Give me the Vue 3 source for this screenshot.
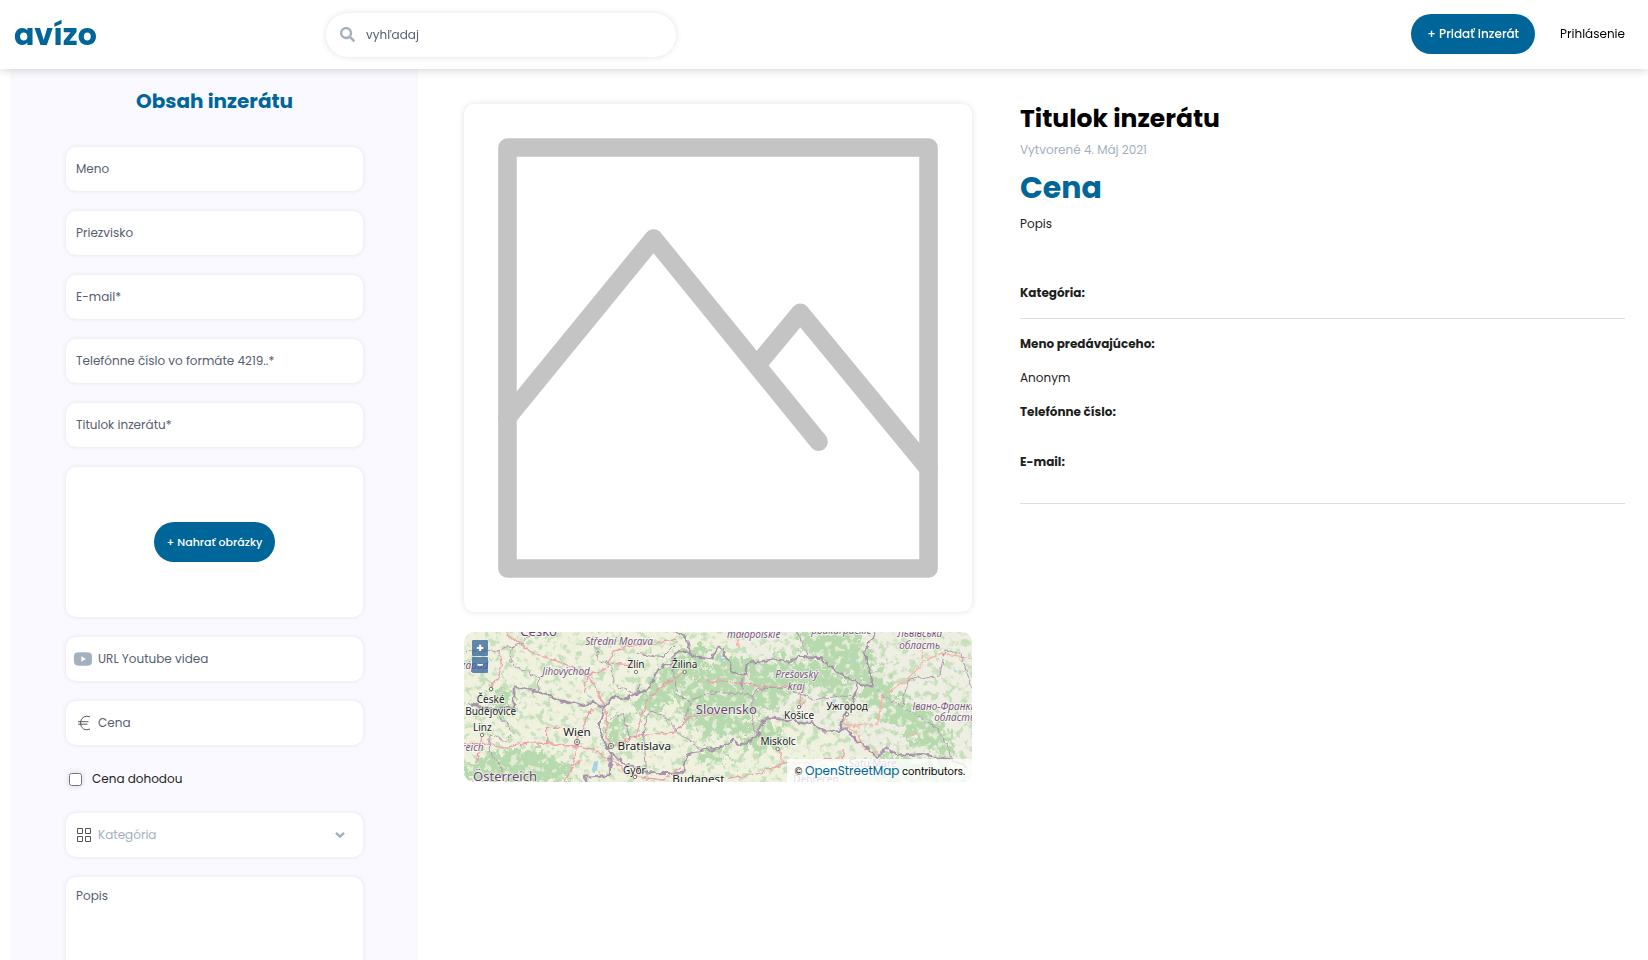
<script setup>
import { reactive } from 'vue'

const textFields = [
  { id: 'meno', label: 'Meno', type: 'text' },
  { id: 'priezvisko', label: 'Priezvisko', type: 'text' },
  { id: 'email', label: 'E-mail*', type: 'email' },
  { id: 'telefon', label: 'Telefónne číslo vo formáte 4219..*', type: 'tel' },
  { id: 'titulok', label: 'Titulok inzerátu*', type: 'text' },
]

const form = reactive({
  meno: '', priezvisko: '', email: '', telefon: '', titulok: '',
  video: '', cena: '', dohodou: false, kategoria: '', popis: '',
})
</script>

<template>
  <div class="app">
    <header class="topbar">
      <a class="logo" href="#">avízo</a>
      <form class="search" role="search" @submit.prevent>
        <svg class="search-icon" viewBox="0 0 512 512" aria-hidden="true">
          <path d="M505 442.7L405.3 343c-4.5-4.5-10.6-7-17-7H372c27.6-35.3 44-79.7 44-128C416 93.1 322.9 0 208 0S0 93.1 0 208s93.1 208 208 208c48.3 0 92.7-16.4 128-44v16.3c0 6.4 2.5 12.5 7 17l99.7 99.7c9.4 9.4 24.6 9.4 33.9 0l28.3-28.3c9.4-9.4 9.4-24.6.1-34zM208 336c-70.7 0-128-57.2-128-128 0-70.7 57.2-128 128-128 70.7 0 128 57.2 128 128 0 70.7-57.2 128-128 128z" />
        </svg>
        <input type="text" placeholder="vyhľadaj" aria-label="vyhľadaj" />
      </form>
      <nav class="actions">
        <button class="pill" type="button">+ Pridať inzerát</button>
        <a class="login" href="#">Prihlásenie</a>
      </nav>
    </header>

    <main class="layout">
      <form class="sidebar" @submit.prevent>
        <h2>Obsah inzerátu</h2>
        <div v-for="f in textFields" :key="f.id" class="field">
          <input v-model="form[f.id]" :type="f.type" :placeholder="f.label" :aria-label="f.label" />
        </div>

        <div class="field upload">
          <button class="pill small" type="button">+ Nahrať obrázky</button>
        </div>

        <div class="field with-icon">
          <svg class="icon" viewBox="0 0 20 16" aria-hidden="true">
            <path fill="#a4b0be" d="M4 1.600 Q10 1.100 16 1.600 Q18.700 1.800 18.900 4.200 Q19.200 8 18.900 11.800 Q18.700 14.200 16 14.400 Q10 14.900 4 14.400 Q1.300 14.200 1.100 11.800 Q.8 8 1.100 4.200 Q1.300 1.800 4 1.600z" />
            <path fill="#fff" d="M8.300 5.200L13 8l-4.700 2.800z" />
          </svg>
          <input v-model="form.video" type="url" placeholder="URL Youtube videa" aria-label="URL Youtube videa" />
        </div>

        <div class="field with-icon">
          <svg class="icon" viewBox="0 0 20 16" aria-hidden="true">
            <path fill="none" stroke="#333" stroke-width=".8" d="M17 1.800Q14 .6 11 1.800Q7.500 3.600 7.500 8Q7.500 12.600 11 14.300Q14 15.500 17 14M5 6.700h10.500M5 9.200h9.500" />
          </svg>
          <input v-model="form.cena" type="text" placeholder="Cena" aria-label="Cena" />
        </div>

        <div class="check">
          <input id="dohodou" v-model="form.dohodou" type="checkbox" />
          <label for="dohodou">Cena dohodou</label>
        </div>

        <div class="field with-icon">
          <svg class="icon" viewBox="0 0 20 16" aria-hidden="true">
            <path fill="none" stroke="#555" d="M4.500 1.500h5v5h-5zM12.500 1.500h5v5h-5zM4.500 9.500h5v5h-5zM12.500 9.500h5v5h-5z" />
          </svg>
          <select v-model="form.kategoria" aria-label="Kategória">
            <option value="">Kategória</option>
          </select>
          <svg class="chevron" viewBox="0 0 10 8" aria-hidden="true">
            <path fill="none" stroke="#a4b0be" stroke-width="2.400" d="M1 1.800l4 3.800 4-3.800" />
          </svg>
        </div>

        <div class="field area">
          <textarea v-model="form.popis" placeholder="Popis" aria-label="Popis"></textarea>
        </div>
      </form>

      <section class="preview">
        <div class="photo">
          <svg viewBox="140 140 1304 1304" role="img" aria-label="Obrázok inzerátu">
            <g fill="none" stroke="#c4c4c4" stroke-width="55" stroke-linejoin="round" stroke-linecap="round">
              <path d="M168 168H1416V1416H168z" />
              <path d="M168 968L601 438L1090 1040M918 800L1036 658L1416 1120" />
            </g>
          </svg>
        </div>

        <div class="map">
          <svg class="map-canvas" viewBox="0 0 1524 450" preserveAspectRatio="xMidYMid slice" role="img" aria-label="Mapa">
            <defs>
              <filter id="ragged" x="-5%" y="-5%" width="110%" height="110%" color-interpolation-filters="sRGB">
                <feTurbulence type="fractalNoise" baseFrequency="0.04" numOctaves="4" seed="4" result="n" />
                <feDisplacementMap in="SourceGraphic" in2="n" scale="90" xChannelSelector="R" yChannelSelector="G" />
              </filter>
              <filter id="crinkle" x="-5%" y="-5%" width="110%" height="110%" color-interpolation-filters="sRGB">
                <feTurbulence type="fractalNoise" baseFrequency="0.05" numOctaves="2" seed="9" result="n" />
                <feDisplacementMap in="SourceGraphic" in2="n" scale="20" xChannelSelector="R" yChannelSelector="G" />
              </filter>
              <filter id="woods" x="0" y="0" width="100%" height="100%" color-interpolation-filters="sRGB">
                <feTurbulence type="fractalNoise" baseFrequency="0.045" numOctaves="4" seed="21" />
                <feColorMatrix values="0 0 0 0 .74  0 0 0 0 .86  0 0 0 0 .70  8 0 0 0 -4.100" />
              </filter>
              <filter id="clearings" x="0" y="0" width="100%" height="100%" color-interpolation-filters="sRGB">
                <feTurbulence type="fractalNoise" baseFrequency="0.05" numOctaves="4" seed="7" />
                <feColorMatrix values="0 0 0 0 .93  0 0 0 0 .94  0 0 0 0 .87  0 8 0 0 -4.300" />
              </filter>
            </defs>
            <rect width="1524" height="450" fill="#f0f2df" />
            <path d="M780 0H1524V450H1200L1120 300L900 250z" fill="#efeee4" />
            <rect width="1524" height="450" filter="url(#woods)" opacity=".8" />
            <g fill="#b7d9ae" filter="url(#ragged)">
              <path d="M0 400L100 360L210 350L310 385L330 450H0z" />
              <path d="M70 165L145 175L150 260L90 240z" />
              <path d="M425 270L495 240L485 325L425 340z" />
              <path d="M505 230L585 120L650 50L730 30L735 90L660 150L610 220L525 250z" />
              <path d="M640 170L780 65L870 90L960 145L930 190L870 230L850 300L740 320L670 270L650 230z" />
              <path d="M830 120L930 75L1060 90L1160 150L1180 210L1130 200L1060 170L990 180L930 240L840 230z" />
              <path d="M1180 25L1250 100L1290 190L1370 220L1450 300L1470 395L1390 350L1280 280L1210 210L1180 150L1010 60L1000 0H1200z" />
              <path d="M830 290L900 270L960 290L930 350L850 365z" />
              <path d="M1240 370L1350 375L1460 400L1460 450H1230z" />
              <path d="M700 350L790 350L800 385L710 395z" />
            </g>
            <rect width="1524" height="450" filter="url(#clearings)" opacity=".8" />

            <g transform="translate(-42 -36)" fill="none">
              <path fill="#a9d3e4" d="M432 425l12-3-2 25-10 13-7-7zM408 222l20 10-8 3z" />
              <g stroke="#ee9dab" stroke-width="4" filter="url(#crinkle)">
                <path d="M160 30L215 75L260 105L330 125L415 168L468 262L470 350L482 378" />
                <path d="M42 370L120 370L150 385L240 368L360 375L430 390L480 420L560 470L640 480L690 440" />
                <path d="M415 165L470 145L490 90L560 75L680 60M415 165L403 215" />
                <path d="M482 378L560 345L590 240L650 190L704 155M550 350L680 335L720 290L810 280" />
                <path d="M380 365L400 320L425 265M290 370L290 325L350 325M380 370L370 430L345 486M385 420L350 470M490 130L550 135M730 180l18 2M770 182l40 2" />
                <path d="M150 90L155 150L124 205M96 345L80 430" />
              </g>
              <g stroke="#b09bb1" stroke-width="3" filter="url(#crinkle)">
                <path d="M185 75L180 120L200 145L270 170L265 215" />
                <path d="M42 95L100 90L140 95L215 70L245 36" />
                <path d="M150 290L190 340L165 365L120 345L118 390L155 440L160 486" />
                <path d="M435 70L445 120L485 135L490 190L560 225L570 195" />
                <path d="M480 300L520 280L540 360L500 380M600 270L580 330L590 460" />
                <path d="M600 270L660 300L680 335L735 370L750 395" />
                <path d="M670 150L680 220L720 250L710 290L680 335M720 240L810 215M560 100L640 110L680 70" />
              </g>
              <g stroke="#a892aa" stroke-width="6" stroke-linejoin="round" filter="url(#crinkle)">
                <path d="M55 250L110 265L190 262L195 200L260 215L330 240L400 258L425 245L465 262L450 300L450 340L470 380L482 395L480 465L400 470L410 486" />
                <path d="M465 262L480 240L500 230L530 238L600 200L625 145L660 130L680 97L710 95L740 110L785 115L805 80L820 90" />
                <path d="M680 36L710 55L720 95M482 395L520 430L590 460L700 458L710 405L735 395L810 385" />
              </g>
            </g>

            <g transform="translate(738 -36)" fill="none">
              <path fill="#a9d3e4" d="M25 112l22 4-12 9zM360 245l18-5-4 12zM425 120l18 6-10 6zM730 145l12 12h-8z" />
              <g stroke="#ee9dab" stroke-width="4" filter="url(#crinkle)">
                <path d="M15 185L100 190L150 200L268 200M268 215L268 258L290 245" />
                <path d="M203 388L220 430L150 460L50 475M215 430L300 432L345 415L400 418L403 390" />
              </g>
              <g stroke="#f3b6a5" stroke-width="4" filter="url(#crinkle)">
                <path d="M415 285L400 310L430 320L500 310L520 230L590 180L635 130L640 60L670 36M400 310L440 340L455 380L500 400M590 350L630 340M635 125L700 100L786 115M80 36L85 90" />
              </g>
              <g stroke="#b09bb1" stroke-width="3" filter="url(#crinkle)">
                <path d="M0 215L130 225L145 205L230 205L310 240L400 225L425 230M130 225L125 290L140 340" />
                <path d="M500 205L530 235L580 260L640 300L690 330L725 415M580 255L590 180L690 165L705 90L750 100L786 205" />
                <path d="M260 36L290 105M100 165L95 220" />
              </g>
              <g stroke="#a892aa" stroke-width="6" stroke-linejoin="round" filter="url(#crinkle)">
                <path d="M35 85L60 130L70 160L105 165L115 130L190 118L240 125L270 110L330 115L380 155L445 190L490 200L485 180L462 95L495 40" />
                <path d="M0 385L25 385L70 360L90 378L140 350L165 295L230 300L310 310L340 335L390 330L400 290L425 250L445 190" />
                <path d="M390 330L410 325L440 365L470 380L500 412L530 385L560 408L640 402L690 415L725 418L770 440" />
              </g>
            </g>

            <g class="dots" transform="translate(-42 -36)">
              <circle cx="123" cy="207" r="5" /><circle cx="96" cy="345" r="5" />
              <circle cx="558" cy="156" r="5" /><circle cx="704" cy="156" r="5" />
              <circle cx="555" cy="471" r="5" /><circle cx="1047" cy="261" r="5" />
              <circle cx="1191" cy="283" r="5" /><circle cx="983" cy="387" r="5" />
              <circle cx="381" cy="366" r="8" /><circle cx="381" cy="366" r="3" />
              <circle cx="483" cy="378" r="8" /><circle cx="483" cy="378" r="3" />
            </g>

            <g class="labels" transform="translate(-42 -36)">
              <g class="country">
                <text x="266" y="48">Česko</text>
                <text x="829" y="282">Slovensko</text>
                <text x="165" y="483">Österreich</text>
              </g>
              <g class="region">
                <text x="507" y="75">Střední Morava</text>
                <text x="348" y="166">Jihovýchod</text>
                <text x="74" y="147">západ</text>
                <text x="62" y="394">rreich</text>
                <text x="911" y="54">małopolskie</text>
                <text x="1174" y="42">podkarpackie</text>
                <text x="1040" y="175">Prešovský</text>
                <text x="1039" y="211">kraj</text>
                <text x="1409" y="50">Львівська</text>
                <text x="1409" y="86">область</text>
                <text x="1486" y="270">Івано-Франків</text>
                <text x="1514" y="304">область</text>
              </g>
              <g class="city">
                <text x="122" y="248">České</text>
                <text x="122" y="284">Budějovice</text>
                <text x="97" y="334">Linz</text>
                <text x="558" y="144">Zlín</text>
                <text x="704" y="144">Žilina</text>
                <text x="553" y="461">Győr</text>
                <text x="1047" y="296">Košice</text>
                <text x="1191" y="270">Ужгород</text>
                <text x="984" y="376">Miskolc</text>
              </g>
              <g class="region-city">
                <text x="1268" y="440">Satu Mare</text>
                <text x="1098" y="490">Debrecen</text>
              </g>
              <g class="capital">
                <text x="381" y="347">Wien</text>
                <text x="583" y="390">Bratislava</text>
                <text x="745" y="488">Budapest</text>
              </g>
            </g>
          </svg>
          <div class="zoom">
            <button type="button" aria-label="Priblížiť">+</button>
            <button type="button" aria-label="Oddialiť">−</button>
          </div>
          <p class="attribution">© <a href="#">OpenStreetMap</a> contributors.</p>
        </div>
      </section>

      <article class="details">
        <h1>Titulok inzerátu</h1>
        <p class="date">Vytvorené 4. Máj 2021</p>
        <p class="price">Cena</p>
        <p class="text">Popis</p>
        <section class="category">
          <h3>Kategória:</h3>
        </section>
        <section class="seller">
          <h3>Meno predávajúceho:</h3>
          <p>Anonym</p>
          <h3>Telefónne číslo:</h3>
          <p class="blank"></p>
          <h3>E-mail:</h3>
        </section>
      </article>
    </main>
  </div>
</template>

<style>
body {
  margin: 0;
  background: #fff;
}
</style>

<style scoped>
* {
  box-sizing: border-box;
}
.app {
  height: 100vh;
  overflow-y: auto;
  scrollbar-width: none;
  color: #1c1e21;
  font: 12px/20px Poppins, Inter, "Noto Sans", sans-serif;
}
h1, h2, h3, p {
  margin: 0;
}
a {
  color: inherit;
  text-decoration: none;
}
input, button, select, textarea {
  font: inherit;
  color: inherit;
}
.topbar {
  position: sticky;
  top: 0;
  z-index: 2;
  display: grid;
  grid-template-columns: 312px 350px 1fr;
  align-items: center;
  height: 69px;
  padding: 0 23px 0 14px;
  background: #fff;
  box-shadow: 0 2px 8px rgba(0, 0, 0, 0.15);
}
.logo {
  color: #006699;
  font-size: 30px;
  font-weight: 700;
  line-height: 40px;
}
.search {
  display: flex;
  align-items: center;
  gap: 11px;
  height: 44px;
  padding: 0 14px;
  border-radius: 22px;
  box-shadow: 0 0 6px rgba(0, 0, 0, 0.12);
}
.search-icon {
  width: 15px;
  height: 15px;
  fill: #a4b0be;
}
.search input {
  flex: 1;
  min-width: 0;
  padding: 0;
  border: 0;
  outline: 0;
  background: none;
}
::placeholder {
  color: #57606f;
  opacity: 1;
}
.actions {
  display: flex;
  justify-content: flex-end;
  align-items: center;
  gap: 25px;
  padding-bottom: 2px;
}
.login {
  color: #000;
}
.pill {
  height: 40px;
  padding: 0 16px;
  border: 0;
  border-radius: 20px;
  background: #006699;
  color: #fff;
  font-weight: 500;
}
.pill.small {
  padding: 0 13px;
  font-size: 11px;
}
.layout {
  display: grid;
  grid-template-columns: 403fr 508fr 605fr;
  gap: 48px;
  align-items: start;
  padding: 0 23px 0 13px;
}
.sidebar {
  display: flex;
  flex-direction: column;
  gap: 20px;
  padding: 16px 53px 40px;
  background: #f9f9ff;
  box-shadow: 0 0 4px rgba(0, 0, 0, 0.08);
}
.sidebar h2 {
  margin-bottom: 10px;
  color: #006699;
  font-size: 20px;
  font-weight: 700;
  line-height: 32px;
  text-align: center;
}
.field {
  display: flex;
  align-items: center;
  height: 44px;
  border-radius: 10px;
  background: #fff;
  box-shadow: 0 0 5px rgba(0, 0, 0, 0.09);
}
.field input, .field select, .field textarea {
  flex: 1;
  min-width: 0;
  height: 100%;
  padding: 0 10px;
  border: 0;
  outline: 0;
  border-radius: 10px;
  background: none;
}
.field select {
  appearance: none;
  color: #a4b0be;
}
.with-icon {
  padding-left: 7px;
}
.field.with-icon input, .field.with-icon select {
  padding: 0 5px;
}
.icon {
  width: 20px;
  height: 16px;
}
.chevron {
  width: 10px;
  height: 8px;
  margin-right: 18px;
}
.upload {
  justify-content: center;
  height: 150px;
}
.check {
  display: flex;
  align-items: center;
  gap: 10px;
  height: 28px;
  padding-left: 3px;
}
.check input {
  width: 13px;
  height: 13px;
  margin: 0;
  box-shadow: 0 0 6px rgba(0, 0, 0, 0.15);
}
.area {
  height: 150px;
}
.field textarea {
  padding: 9px 10px;
  resize: none;
}
.preview {
  display: grid;
  gap: 20px;
  padding-top: 35px;
}
.photo {
  padding: 34px;
  border-radius: 10px;
  box-shadow: 0 0 6px rgba(0, 0, 0, 0.12);
}
.photo svg {
  display: block;
  width: 100%;
}
.map {
  position: relative;
  height: 150px;
  overflow: hidden;
  border-radius: 10px;
}
.map-canvas {
  display: block;
  width: 100%;
  height: 100%;
}
.labels {
  font-family: "Noto Sans", sans-serif;
  text-anchor: middle;
  paint-order: stroke;
  stroke: rgba(255, 255, 255, 0.7);
  stroke-width: 5px;
}
.country {
  fill: #6c456f;
  font-size: 39px;
}
.region {
  fill: #79577d;
  font-size: 30px;
  font-style: italic;
}
.city, .region-city {
  fill: #222;
  font-size: 30px;
}
.region-city {
  fill: #6c456f;
}
.capital {
  fill: #222;
  font-size: 35px;
}
.dots {
  fill: #fff;
  stroke: #444;
  stroke-width: 2px;
}
.zoom {
  position: absolute;
  top: 8px;
  left: 8px;
  display: grid;
  gap: 1px;
}
.zoom button {
  width: 16px;
  height: 16px;
  padding: 0;
  border: 0;
  border-radius: 1px;
  background: rgba(50, 98, 155, 0.75);
  color: #fff;
  font-weight: 700;
  line-height: 16px;
}
.attribution {
  position: absolute;
  right: 0;
  bottom: 0;
  padding: 2px 7px 0;
  background: rgba(255, 255, 255, 0.8);
  color: #000;
  font-size: 10px;
}
.attribution a {
  color: #006699;
  font-size: 12px;
}
.details {
  padding-top: 34px;
}
.details h1 {
  color: #000;
  font-size: 25px;
  font-weight: 700;
  line-height: 32px;
}
.date {
  margin-top: 5px;
  color: #a4b0be;
}
.price {
  margin-top: 8px;
  color: #006699;
  font-size: 30px;
  font-weight: 700;
  line-height: 40px;
}
.text {
  margin-top: 6px;
}
.details h3 {
  font-size: 12px;
  font-weight: 700;
  line-height: 20px;
}
.category {
  margin-top: 49px;
  padding-bottom: 15px;
  border-bottom: 1px solid #dcdee0;
}
.seller {
  display: grid;
  gap: 14px;
  padding: 15px 0 31px;
  border-bottom: 1px solid #dcdee0;
}
.blank {
  height: 2px;
}
</style>
